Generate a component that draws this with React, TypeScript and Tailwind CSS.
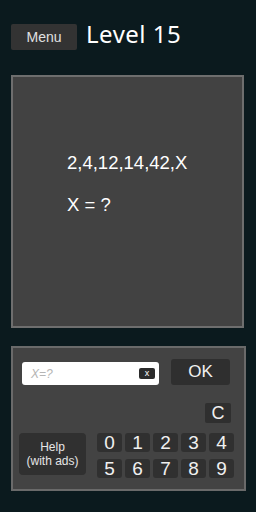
const digitsTop = ['0', '1', '2', '3', '4'];
const digitsBottom = ['5', '6', '7', '8', '9'];

const sans = "font-['Liberation_Sans',Arial,sans-serif]";

export default function App() {
  return (
    <div className="w-[256px] h-[512px] bg-[#0b1a1e] px-[11px] pt-[24px] overflow-hidden">
      {/* Header */}
      <div className="flex items-center">
        <button className={`w-[66px] h-[26px] bg-[#333333] rounded-[2px] text-[14px] text-[#e0e0e0] ${sans}`}>
          Menu
        </button>
        <h1 className="ml-[9px] text-[24px] leading-none text-white font-['Noto_Sans',sans-serif] tracking-[0.5px] -mt-[6px]">
          Level 15
        </h1>
      </div>

      {/* Puzzle panel */}
      <div className={`mt-[25px] w-[233px] h-[253px] border-2 border-[#6e6e6e] bg-[#424242] pl-[54px] pt-[75px] text-white ${sans}`}>
        <div className="text-[18.5px] leading-[22px]">2,4,12,14,42,X</div>
        <div className="mt-[20px] text-[18.5px] leading-[22px]">X = ?</div>
      </div>

      {/* Answer panel */}
      <div className={`mt-[18px] w-[235px] h-[145px] border-2 border-[#6a6a6a] bg-[#434343] px-[9px] pt-[11px] ${sans}`}>
        <div className="flex items-start">
          <div className="mt-[3px] w-[137px] h-[23px] bg-white rounded-[3px] flex items-center pl-[9px] pr-[4px]">
            <span className="italic text-[12px] text-[#b5b5b5] flex-1">X=?</span>
            <span className="w-[16px] h-[11px] bg-[#2b2b2b] rounded-[2px] text-[9px] leading-[11px] text-white text-center">x</span>
          </div>
          <button className="ml-[12px] w-[59px] h-[26px] bg-[#2f2f2f] rounded-[3px] text-[17px] text-[#f0f0f0]">
            OK
          </button>
        </div>

        <div className="flex justify-end pr-[4px] mt-[18px]">
          <button className="w-[26px] h-[20px] bg-[#2f2f2f] rounded-[2px] text-[18px] leading-[20px] text-[#f0f0f0]">
            C
          </button>
        </div>

        <div className="flex items-start mt-[10px] -ml-[3px]">
          <button className="w-[67px] h-[42px] bg-[#303030] rounded-[4px] text-[12px] leading-[14px] text-[#e6e6e6]">
            Help
            <br />
            (with ads)
          </button>
          <div className="ml-[11px] flex flex-col gap-[7px]">
            {[digitsTop, digitsBottom].map((row, r) => (
              <div key={r} className="flex gap-[3px]">
                {row.map((d) => (
                  <button
                    key={d}
                    className="w-[25px] h-[19px] bg-[#303030] rounded-[3px] text-[19px] leading-[19px] text-[#f0f0f0]"
                  >
                    {d}
                  </button>
                ))}
              </div>
            ))}
          </div>
        </div>
      </div>
    </div>
  );
}
